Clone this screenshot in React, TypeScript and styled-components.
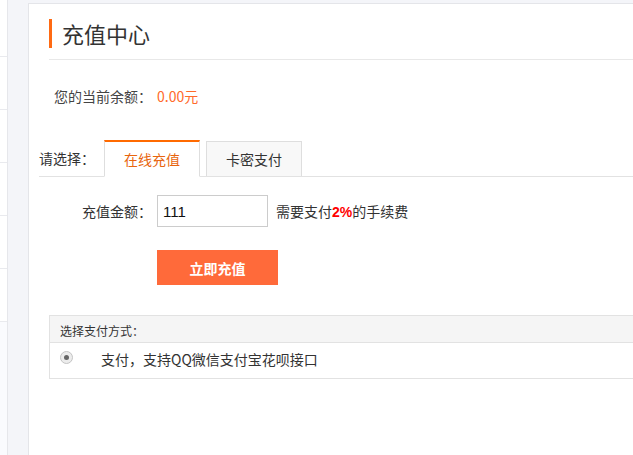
import React from "react";
import styled, { createGlobalStyle } from "styled-components";

const Global = createGlobalStyle`
  html, body { margin: 0; padding: 0; background: #f4f5f9; overflow: hidden; }
  body {
    font-family: "Noto Sans CJK SC", "Microsoft YaHei", "Liberation Sans", sans-serif;
    color: #333;
  }
  * { box-sizing: border-box; }
`;

const Page = styled.div`
  display: flex;
  align-items: flex-start;
  width: 100%;
  height: 455px;
`;

const Sidebar = styled.div`
  width: 8px;
  height: 100%;
  background: #fafbfe;
  border-right: 1px solid #e6e7eb;
  display: flex;
  flex-direction: column;
`;

const SideItem = styled.div<{ $h: number }>`
  height: ${(p) => p.$h}px;
  background: #fff;
  border-bottom: 1px solid #e9eaee;
`;

const Panel = styled.div`
  flex: 1;
  margin: 3px 0 0 20px;
  min-height: 460px;
  background: #fff;
  border-left: 1px solid #e4e5e9;
  border-top: 1px solid #e4e5e9;
  padding-left: 10px;
`;

const Header = styled.div`
  margin-left: 10px;
  padding: 15px 0 11px;
  border-bottom: 1px solid #e8e8e8;
`;

const Title = styled.h1`
  margin: 0;
  height: 29px;
  border-left: 3px solid #ff6a13;
  padding-left: 10px;
  font-size: 22px;
  font-weight: normal;
  line-height: 29px;
  color: #333;
`;

const Balance = styled.div`
  padding-left: 15px;
  margin-top: 26px;
  font-size: 14px;
  line-height: 20px;
  color: #444;
`;

const Money = styled.span`
  color: #ff6a2a;
  font-size: 14px;
  margin-left: 5px;
`;

const TabRow = styled.div`
  display: flex;
  align-items: flex-end;
  margin-top: 34px;
  border-bottom: 1px solid #e2e2e2;
  height: 37px;
`;

const TabLabel = styled.div`
  width: 65px;
  font-size: 14px;
  line-height: 36px;
  color: #333;
  align-self: stretch;
`;

const Tab = styled.div<{ $active?: boolean }>`
  width: 96px;
  margin-right: 6px;
  text-align: center;
  font-size: 14px;
  color: ${(p) => (p.$active ? "#e8650e" : "#333")};
  background: ${(p) => (p.$active ? "#fff" : "#f8f8f8")};
  border: 1px solid #dedede;
  border-top: ${(p) => (p.$active ? "2px solid #ff6a00" : "1px solid #dedede")};
  border-bottom: ${(p) => (p.$active ? "1px solid #fff" : "none")};
  height: ${(p) => (p.$active ? 37 : 35)}px;
  line-height: 34px;
  margin-bottom: ${(p) => (p.$active ? -1 : 0)}px;
`;

const FormRow = styled.div`
  display: flex;
  align-items: center;
  padding-left: 43px;
  margin-top: 18px;
`;

const FieldLabel = styled.label`
  width: 75px;
  font-size: 14px;
  color: #333;
`;

const AmountInput = styled.input`
  width: 111px;
  height: 32px;
  border: 1px solid #cccccc;
  padding: 0 5px;
  font-size: 15px;
  font-family: "Liberation Sans", Arial, sans-serif;
  color: #111;
  outline: none;
`;

const Fee = styled.span`
  margin-left: 8px;
  font-size: 14px;
  color: #333;
`;

const Rate = styled.b`
  color: #f00;
  font-size: 14px;
  font-family: "Liberation Sans", Arial, sans-serif;
`;

const ButtonRow = styled.div`
  padding-left: 118px;
  margin-top: 23px;
`;

const Submit = styled.button`
  width: 121px;
  height: 35px;
  border: none;
  background: #ff6a3a;
  color: #fff;
  font-size: 14px;
  font-weight: bold;
  font-family: inherit;
  cursor: pointer;
`;

const PayBox = styled.div`
  margin: 30px 0 0 10px;
  border: 1px solid #e2e2e2;
  border-right: none;
`;

const PayHead = styled.div`
  height: 27px;
  line-height: 29px;
  background: #f5f5f5;
  border-bottom: 1px solid #e2e2e2;
  padding-left: 10px;
  font-size: 12px;
  color: #333;
`;

const PayOption = styled.label`
  display: flex;
  align-items: center;
  height: 35px;
  padding: 0 0 3px 10px;
  font-size: 14px;
  color: #333;
`;

const Radio = styled.span`
  width: 13px;
  height: 13px;
  border-radius: 50%;
  border: 1px solid #c4c4c4;
  background: #ececec;
  display: flex;
  align-items: center;
  justify-content: center;
  margin-top: -3px;
  margin-right: 28px;
  &::after {
    content: "";
    width: 5px;
    height: 5px;
    border-radius: 50%;
    background: #666;
  }
`;

export default function App() {
  const sideHeights = [57, 53, 53, 53, 53, 53];
  return (
    <>
      <Global />
      <Page>
        <Sidebar>
          {sideHeights.map((h, i) => (
            <SideItem key={i} $h={h} />
          ))}
        </Sidebar>
        <Panel>
          <Header>
            <Title>充值中心</Title>
          </Header>
          <Balance>
            您的当前余额：<Money>0.00元</Money>
          </Balance>
          <TabRow>
            <TabLabel>请选择：</TabLabel>
            <Tab $active>在线充值</Tab>
            <Tab>卡密支付</Tab>
          </TabRow>
          <FormRow>
            <FieldLabel>充值金额：</FieldLabel>
            <AmountInput defaultValue="111" />
            <Fee>
              需要支付<Rate>2%</Rate>的手续费
            </Fee>
          </FormRow>
          <ButtonRow>
            <Submit>立即充值</Submit>
          </ButtonRow>
          <PayBox>
            <PayHead>选择支付方式：</PayHead>
            <PayOption>
              <Radio />
              支付，支持QQ微信支付宝花呗接口
            </PayOption>
          </PayBox>
        </Panel>
      </Page>
    </>
  );
}
